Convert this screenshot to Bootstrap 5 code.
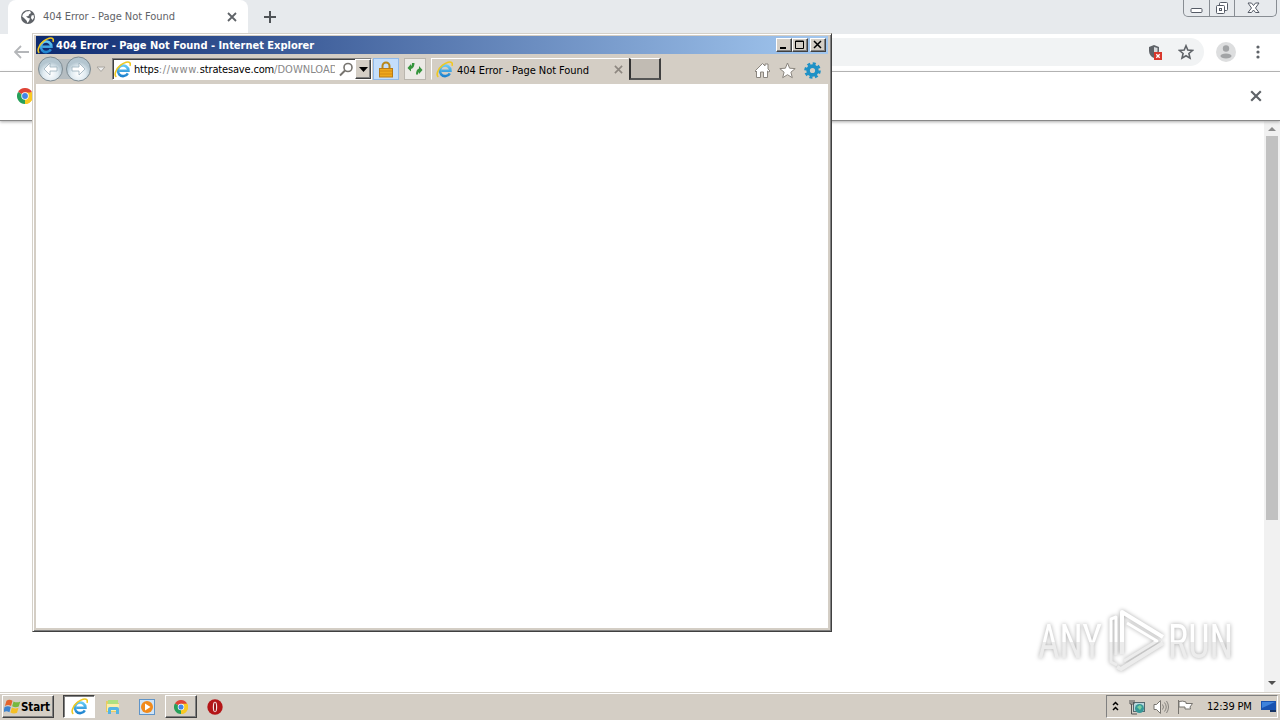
<!DOCTYPE html>
<html lang="en">
<head>
<meta charset="utf-8">
<meta name="viewport" content="width=device-width, initial-scale=1">
<title>404 Error - Page Not Found</title>
<link href="https://cdn.jsdelivr.net/npm/bootstrap@5.3.0/dist/css/bootstrap.min.css" rel="stylesheet">
<style>
html,body{height:100%;overflow:hidden}
body{font:11px/14px "DejaVu Sans Condensed","DejaVu Sans",sans-serif;font-stretch:condensed;color:#000;background:#fff}
svg{display:block;flex:none}
.desktop{width:1280px;height:720px}
.tabstrip{height:34px;background:#e7eaed}
.chrome-tab{width:240px;height:34px;margin-left:8px;padding:0 11px 0 13px;border-radius:8px 8px 0 0;background:#fff;color:#5f6368}
.tab-title{letter-spacing:-.07px;white-space:nowrap}
.winctl{width:94px;height:17px;margin-right:3px;border:1px solid #888d93;border-top:0;border-radius:0 0 5px 5px}
.winctl>div{height:16px}
.winctl>div+div{border-left:1px solid #888d93}
.toolbar{height:38px;padding-bottom:2px;border-bottom:1px solid #b4b4b4}
.omnibox{width:1170px;height:28px;padding-right:10px;border-radius:14px;background:#f1f3f4}
.infobar{height:49px;border-bottom:1px solid #888;box-shadow:0 1px 3px #aaa;z-index:1}
.scroller{width:16px;background:#f1f1f1}
.thumb{width:12px;height:384px;background:#c1c1c1}
.taskbar{height:28px;background:#d4cec5;border-top:1px solid #d4d0c8;box-shadow:inset 0 1px #fff;padding:2px 2px 2px}
.raised{background:#d4cec5;border:1px solid;border-color:#fff #404040 #404040 #fff;box-shadow:inset -1px -1px #808080}
.sunken{background:#fff;border:1px solid;border-color:#404040 #fff #fff #404040;box-shadow:inset 1px 1px #808080}
.tbtn{width:32px;height:23px}
.start{width:52px;height:23px;padding-left:1px;font-size:11.500px;font-weight:700;letter-spacing:-.1px}
.tray{width:172px;height:23px;border:1px solid;border-color:#808080 #fff #fff #808080}
.ie-window{left:32px;top:33px;width:800px;height:599px;background:#d4cec5;border:1px solid;border-color:#d4d0c8 #404040 #404040 #d4d0c8;box-shadow:inset 1px 1px #fff,inset -1px -1px #808080;padding:2px 3px 3px;z-index:3}
.titlebar{height:18px;background:linear-gradient(90deg,#0d2a70,#a3c8f0);color:#fff;font-weight:700;padding:0 2px 0 1px}
.title-text{letter-spacing:-.01px;padding:1px 0 0 2px}
.capbtn{width:16px;height:14px}
.ie-tools{height:30px}
.addr{width:260px;height:22px;border:1px solid;border-color:#808080 #fff #fff #808080;box-shadow:inset 1px 1px #404040;background:#fff;color:#888}
.addr-text{width:201px;padding-top:2px;overflow:hidden;white-space:nowrap;letter-spacing:-.17px}
.addr-text b{font-weight:400;color:#000}
.addr-host{letter-spacing:.68px}
.addr-path{letter-spacing:.05px}
.lock{width:26px;height:22px;background:#c4defb;border:1px solid #8fb9ea}
.refresh{width:22px;height:22px;background:#eceae6;border:1px solid #bab6ae}
.ie-tab{width:198px;height:22px;border:1px solid;border-color:#fff #d4cec5 #d4cec5 #fff}
.newtab{width:32px;height:22px;background:#c1bbb3;border:2px solid;border-width:1px 2px 2px 2px;border-color:#fff #404040 #555 #333}
.watermark{left:1030px;top:604px}
.wm-glow{filter:drop-shadow(0 0 2px #aaa)}
</style>
</head>
<body>
<svg width="0" height="0" class="position-absolute">
<defs>
<linearGradient id="eb" x2="0" y2="1"><stop stop-color="#64caf5"/><stop offset="1" stop-color="#1e83cf"/></linearGradient>
<linearGradient id="wm" gradientUnits="userSpaceOnUse" x1="0" y1="0" x2="0" y2="72"><stop offset=".53" stop-color="#fff"/><stop offset=".53" stop-color="#ececec"/></linearGradient>
<radialGradient id="nb" cy=".7"><stop stop-color="#fff"/><stop offset=".6" stop-color="#e0ebf1"/><stop offset="1" stop-color="#b4c6d0"/></radialGradient>
<symbol id="ie" viewBox="0 0 16 16"><path d="M13 11.600A5 5 0 1 1 13.600 9.100H5" fill="none" stroke="url(#eb)" stroke-width="2.400"/><path d="M2.200 15C-.3 13.200 1.700 7.500 6.200 3.900 9.800 1 13.600.1 14.900 1.600c.6.8.5 1.900.1 3" fill="none" stroke="#efc822" stroke-width="1.500"/></symbol>
<symbol id="chrome" viewBox="0 0 16 16"><path d="M8 8 1.070 4A8 8 0 0 1 14.930 4Z" fill="#df4437"/><path d="M8 8 14.930 4A8 8 0 0 1 8 16Z" fill="#f9c923"/><path d="M8 8V16A8 8 0 0 1 1.070 4Z" fill="#27a05a"/><path d="M8 4.400H15.100A8 8 0 0 1 8 16L11.200 9.800Z" fill="#f9c923"/><circle cx="8" cy="8" r="3.700" fill="#fff"/><circle cx="8" cy="8" r="2.900" fill="#4285e8"/></symbol>
<symbol id="cross" viewBox="0 0 10 10"><path d="m1 1 8 8m0-8-8 8" fill="none" stroke="currentColor" stroke-width="1.800"/></symbol>
</defs>
</svg>
<div class="desktop d-flex flex-column position-relative overflow-hidden">
  <div class="tabstrip d-flex align-items-start">
    <div class="chrome-tab d-flex align-items-center">
      <svg width="14" height="14" viewBox="0 0 14 14"><circle cx="7" cy="7" r="7" fill="#5f6368"/><path d="M5 1.500 9 1l1 2-2 1.500L7.500 6 5 6.500 7 8l2 .5L8 11l-1.500 2-1-2.500L3 8 1.200 6.500 2 4Zm5.500 4 2-.5.500 2.500-1.500 2.500-1.500-2Z" fill="#fff"/></svg>
      <span class="tab-title ms-2 me-auto">404 Error - Page Not Found</span>
      <svg width="10" height="10"><use href="#cross"/></svg>
    </div>
    <svg class="ms-3 mt-2" width="12" height="18" viewBox="0 0 12 18"><path d="M6 3v12M0 9h12" stroke="#4f5357" stroke-width="2"/></svg>
    <div class="winctl ms-auto d-flex">
      <div class="d-flex justify-content-center" style="width:25px"><svg width="13" height="16" viewBox="0 0 13 16"><rect x="1" y="8.500" width="11" height="4" rx="1" fill="#fff" stroke="#555b66"/></svg></div>
      <div class="d-flex justify-content-center" style="width:25px"><svg width="14" height="16" viewBox="0 0 14 16"><g fill="#fff" stroke="#555b66"><rect x="4.500" y="2.500" width="8" height="8" rx="1"/><rect x="1.500" y="5.500" width="8" height="8" rx="1"/><rect x="4.500" y="8.500" width="2" height="2"/></g></svg></div>
      <div class="d-flex justify-content-center flex-fill pe-1"><svg width="13" height="16" viewBox="0 0 13 16"><path d="M1 3h3.500l2 2.500 2-2.500H12L8.500 8l3.500 4.500H8.500l-2-2.500-2 2.500H1L4.500 8Z" fill="#fff" stroke="#555b66"/></svg></div>
    </div>
  </div>
  <div class="toolbar d-flex align-items-center">
    <svg style="margin-left:14px" width="16" height="14" viewBox="0 0 16 14"><path d="M7 1 1 7l6 6M1 7h14" fill="none" stroke="#b4b6b9" stroke-width="1.800"/></svg>
    <div class="omnibox flex-shrink-0 d-flex align-items-center justify-content-end ms-1">
      <svg class="me-3" width="14" height="16" viewBox="0 0 14 16"><path d="M6 1 1 3v4c0 3 2 6 5 7 3-1 5-4 5-7V3Z" fill="#5f6368"/><path d="M6 3v9c2-1 3.500-3 3.500-5V4Z" fill="#d6d9dc"/><rect x="6" y="8" width="8" height="8" fill="#d9372c"/><path d="m8.300 10.300 3.400 3.400m0-3.400-3.400 3.400" stroke="#fff" stroke-width="1.300"/></svg>
      <svg width="16" height="16" viewBox="0 0 16 16"><path d="m8 1.800 1.800 4.300 4.600.4-3.500 3 1.100 4.600L8 11.700l-4 2.400 1.100-4.600-3.500-3 4.600-.4Z" fill="none" stroke="#5f6368" stroke-width="1.600"/></svg>
    </div>
    <svg class="ms-2 ps-1" style="margin-right:19px" width="24" height="20" viewBox="0 0 20 20"><circle cx="10" cy="10" r="10" fill="#dddedf"/><circle cx="10" cy="6.500" r="3.200" fill="#a2a4a6"/><ellipse cx="10" cy="14" rx="5.500" ry="2.600" fill="#a2a4a6"/></svg>
    <svg width="6" height="16" viewBox="0 0 6 16" fill="#5f6368"><circle cx="3" cy="3" r="1.600"/><circle cx="3" cy="8" r="1.600"/><circle cx="3" cy="13" r="1.600"/></svg>
  </div>
  <div class="infobar d-flex align-items-center bg-white">
    <svg style="margin-left:17px" width="16" height="16"><use href="#chrome"/></svg>
    <svg class="ms-auto" style="margin-right:18px;color:#5f6368" width="12" height="12"><use href="#cross"/></svg>
  </div>
  <div class="flex-grow-1 d-flex justify-content-end">
    <div class="scroller d-flex flex-column align-items-center">
      <svg width="16" height="15" viewBox="0 0 16 15"><path d="m4 10 4-4 4 4Z" fill="#8b8b8b"/></svg>
      <div class="thumb"></div>
      <svg class="mt-auto" width="16" height="17" viewBox="0 0 16 17"><path d="m4 6 4 4 4-4Z" fill="#505050"/></svg>
    </div>
  </div>
  <div class="taskbar d-flex align-items-center">
    <div class="start raised d-flex align-items-center">
      <svg width="17" height="17" viewBox="0 0 15 15"><path d="M2.200 2.500C4 1 6 1.500 7.500 2.500L6.200 7C4.500 6 3 5.800.8 7Z" fill="#e4642c"/><path d="M8.400 3c2 1 4 1 6 0L13 7.500c-2 1-4 .8-5.800-.2Z" fill="#76b83f"/><path d="M.5 8c2-1.200 4-1 5.500 0l-1.200 4.500c-2-1-3.500-1-5.300 0Z" fill="#3d83cf"/><path d="M7 8.300c2 1 3.800 1.200 5.800.2l-1.300 4.500c-2 1-4 .8-5.800-.2Z" fill="#f5bf25"/></svg><span>Start</span>
    </div>
    <div class="tbtn sunken d-flex align-items-center justify-content-center" style="margin-left:9px"><svg width="17" height="17"><use href="#ie"/></svg></div>
    <svg style="margin-left:10px" width="16" height="17" viewBox="0 0 16 17"><path d="M1 3h5l1 2h7v9H1Z" fill="#e8cc62"/><path d="M3 2h10v5H3Z" fill="#aee080"/><path d="M2 6h12v7H2Z" fill="#faeeaa"/><path d="M3 16v-5q0-2 2-2h7q2 0 2 2v5h-3v-4H6v4Z" fill="#54b4e4"/></svg>
    <svg style="margin-left:18px" width="16" height="16" viewBox="0 0 16 16"><rect x=".5" y=".5" width="15" height="15" fill="#cfe4f7" stroke="#5f94c8"/><circle cx="8" cy="8" r="6" fill="#f18a1b"/><path d="m6 4.500 5.500 3.500L6 11.500Z" fill="#fff"/></svg>
    <div class="tbtn raised d-flex align-items-center justify-content-center" style="margin-left:10px"><svg width="14" height="14"><use href="#chrome"/></svg></div>
    <svg style="margin-left:10px" width="16" height="16" viewBox="0 0 16 16"><circle cx="8" cy="8" r="7.700" fill="#b41517"/><ellipse cx="8" cy="8" rx="2.200" ry="5.200" fill="#f8e5e5"/><ellipse cx="8" cy="8" rx="1" ry="4.600" fill="#951012"/></svg>
    <div class="tray ms-auto d-flex align-items-center">
      <svg style="margin-left:5px" width="7" height="12" viewBox="0 0 7 12"><path d="m1 4 2.500-2.500L6 4M1 9l2.500-2.500L6 9" fill="none" stroke="#000" stroke-width="1.500"/></svg>
      <svg style="margin-left:10px" width="16" height="16" viewBox="0 0 16 16"><rect x="4.500" y="3.500" width="11" height="9" fill="#b8d7dc" stroke="#55686f"/><path d="M2.500 5v10H8M1 1v4h4V1M3 1v3" fill="none" stroke="#555"/><circle cx="10.500" cy="9.500" r="4.500" fill="#369898"/><path d="m8 8 3-2 2 2-2 3Z" fill="#7acfa0"/></svg>
      <svg style="margin-left:8px" width="16" height="16" viewBox="0 0 16 16"><path d="M1 5.500h2.500l4-4v13l-4-4H1Z" fill="#fff" stroke="#77746f"/><path d="M9.500 5.500q2 2.500 0 5m2-7q3.500 4.500 0 9m2-10.500q4 6 0 12" fill="none" stroke="#85827d"/></svg>
      <svg style="margin-left:8px" width="17" height="16" viewBox="0 0 17 16"><path d="M1.500 1v14M2 2.500q4-1 7 .5v1.500h6.500L13 8l.5 2H8V8H2Z" fill="#fff" stroke="#77746f"/></svg>
      <span class="text-nowrap" style="margin-left:13px;letter-spacing:-.2px">12:39 PM</span>
      <svg class="ms-auto" width="16" height="15" viewBox="0 0 16 15"><path d="M0 2h15v9H0Z" fill="#1852b0"/><path d="M1 3h13L1 9Z" fill="#3d82dc"/><path d="M9 11h6v2H9Z" fill="#183564"/></svg>
    </div>
  </div>

  <svg class="watermark position-absolute" width="230" height="72" viewBox="0 0 230 72">
    <g class="wm-glow" fill="none" stroke="url(#wm)" stroke-linejoin="round">
      <path d="M86 51V13l-5 2v43l6 3" stroke-width="3"/>
      <path d="M92 50V8l41 25" stroke-width="4"/>
      <path d="m97 19 30 18-33 20" stroke-width="3"/>
      <path d="m133 39-42 26-4-2" stroke-width="4"/>
      <g fill="url(#wm)" stroke="none" font-family="Roboto" font-size="48"><text x="8" y="54" textLength="64" lengthAdjust="spacingAndGlyphs">ANY</text><text x="138" y="54" textLength="65" lengthAdjust="spacingAndGlyphs">RUN</text></g>
    </g>
  </svg>

  <section class="ie-window position-absolute d-flex flex-column">
    <div class="titlebar d-flex align-items-center">
      <svg width="17" height="17"><use href="#ie"/></svg>
      <span class="title-text me-auto text-nowrap">404 Error - Page Not Found - Internet Explorer</span>
      <div class="capbtn raised"><svg width="14" height="12"><path d="M3 9h6" stroke="#000" stroke-width="2"/></svg></div>
      <div class="capbtn raised"><svg width="14" height="12"><path d="M2.500 2h8v7.500h-8ZM2 2.500h9" fill="none" stroke="#000"/></svg></div>
      <div class="capbtn raised" style="margin-left:2px"><svg width="14" height="12"><path d="m3 2 7 7m0-7-7 7" stroke="#000" stroke-width="1.500"/></svg></div>
    </div>
    <div class="ie-tools d-flex align-items-center">
      <svg style="margin-left:2px" width="53" height="26" viewBox="0 0 53 26"><rect x="10" y="3" width="32" height="20" fill="#b5bdc1"/><g fill="url(#nb)" stroke="#7e8b92"><circle cx="12.500" cy="13" r="12"/><circle cx="40.500" cy="13" r="12"/></g><path d="m12 7-6 6 6 6v-4h7v-4h-7Zm29 0 6 6-6 6v-4h-7v-4h7Z" fill="#fff" stroke="#9aafba" stroke-width=".8"/></svg>
      <svg style="margin-left:5px" width="10" height="8" viewBox="0 0 10 8"><path d="M1 2h8L5 6.500Z" fill="#eee" stroke="#aaa6a0"/></svg>
      <div class="addr d-flex align-items-center" style="margin-left:6px">
        <svg style="margin:0 3px 0 1px" width="17" height="17"><use href="#ie"/></svg>
        <span class="addr-text"><b>https</b><span class="addr-host">://www.</span><b>stratesave.com</b><span class="addr-path">/DOWNLOAD</span></span>
        <svg style="margin-left:4px" width="15" height="15" viewBox="0 0 15 15"><circle cx="9" cy="5.500" r="4" fill="none" stroke="#77746f" stroke-width="1.600"/><path d="m6 8.500-5 5" stroke="#77746f" stroke-width="2"/></svg>
        <div class="raised ms-auto d-flex align-items-center justify-content-center" style="width:16px;height:20px"><svg width="9" height="5"><path d="M0 0h9L4.500 5Z"/></svg></div>
      </div>
      <div class="lock d-flex justify-content-center align-items-center" style="margin-left:1px"><svg width="14" height="17" viewBox="0 0 14 17"><path d="M3.500 8V5a3.500 3.500 0 0 1 7 0v3" fill="none" stroke="#b88719" stroke-width="2"/><rect x=".5" y="7.500" width="13" height="8.500" fill="#efa91f" stroke="#b97b16"/><path d="M1 10h12M1 13h12" stroke="#d48914"/></svg></div>
      <div class="refresh d-flex align-items-center justify-content-center" style="margin-left:5px"><svg width="16" height="16" viewBox="0 0 16 16"><path d="M.5 7 4 3v2.300Q5 4.500 5 2h2.500q0 5-3.500 6v2.500Zm15 2L12 5v2.500q-3 1-3 6h2q0-2 1-2.500V13Z" fill="#35943c"/></svg></div>
      <div class="ie-tab d-flex align-items-center" style="margin-left:5px">
        <svg style="margin-left:4px" width="17" height="17"><use href="#ie"/></svg>
        <span class="tab-title ms-1 me-auto pt-1">404 Error - Page Not Found</span>
        <svg style="margin-right:5px;color:#8d8780" width="9" height="9"><use href="#cross"/></svg>
      </div>
      <div class="newtab"></div>
      <svg style="margin-left:93px;margin-top:3px" width="17" height="17" viewBox="0 0 17 17"><path d="m1.500 8.500 7-7 2.500 2.500V2h3v5l2 2-1.200 1-1.300-1v6.500h-4V10h-3v5.500h-4V9l-1 1Z" fill="#fff" stroke="#8a857e"/></svg>
      <svg style="margin-left:8px;margin-top:3px" width="17" height="17" viewBox="0 0 17 17"><path d="m8.500 1 2.100 5.200 5.600.4-4.300 3.600 1.400 5.500-4.800-3-4.800 3 1.400-5.500L.8 6.600l5.600-.4Z" fill="#fff" stroke="#8a857e"/></svg>
      <svg style="margin-left:8px;margin-top:3px" width="17" height="17" viewBox="0 0 17 17"><g fill="none" stroke="#1e91c6"><circle cx="8.500" cy="8.500" r="4.400" stroke-width="3.600"/><circle cx="8.500" cy="8.500" r="7" stroke-width="2.600" stroke-dasharray="3 2.498"/></g></svg>
    </div>
    <div class="flex-grow-1 bg-white"></div>
  </section>
</div>
<script src="https://cdn.jsdelivr.net/npm/bootstrap@5.3.0/dist/js/bootstrap.bundle.min.js"></script>
</body>
</html>
